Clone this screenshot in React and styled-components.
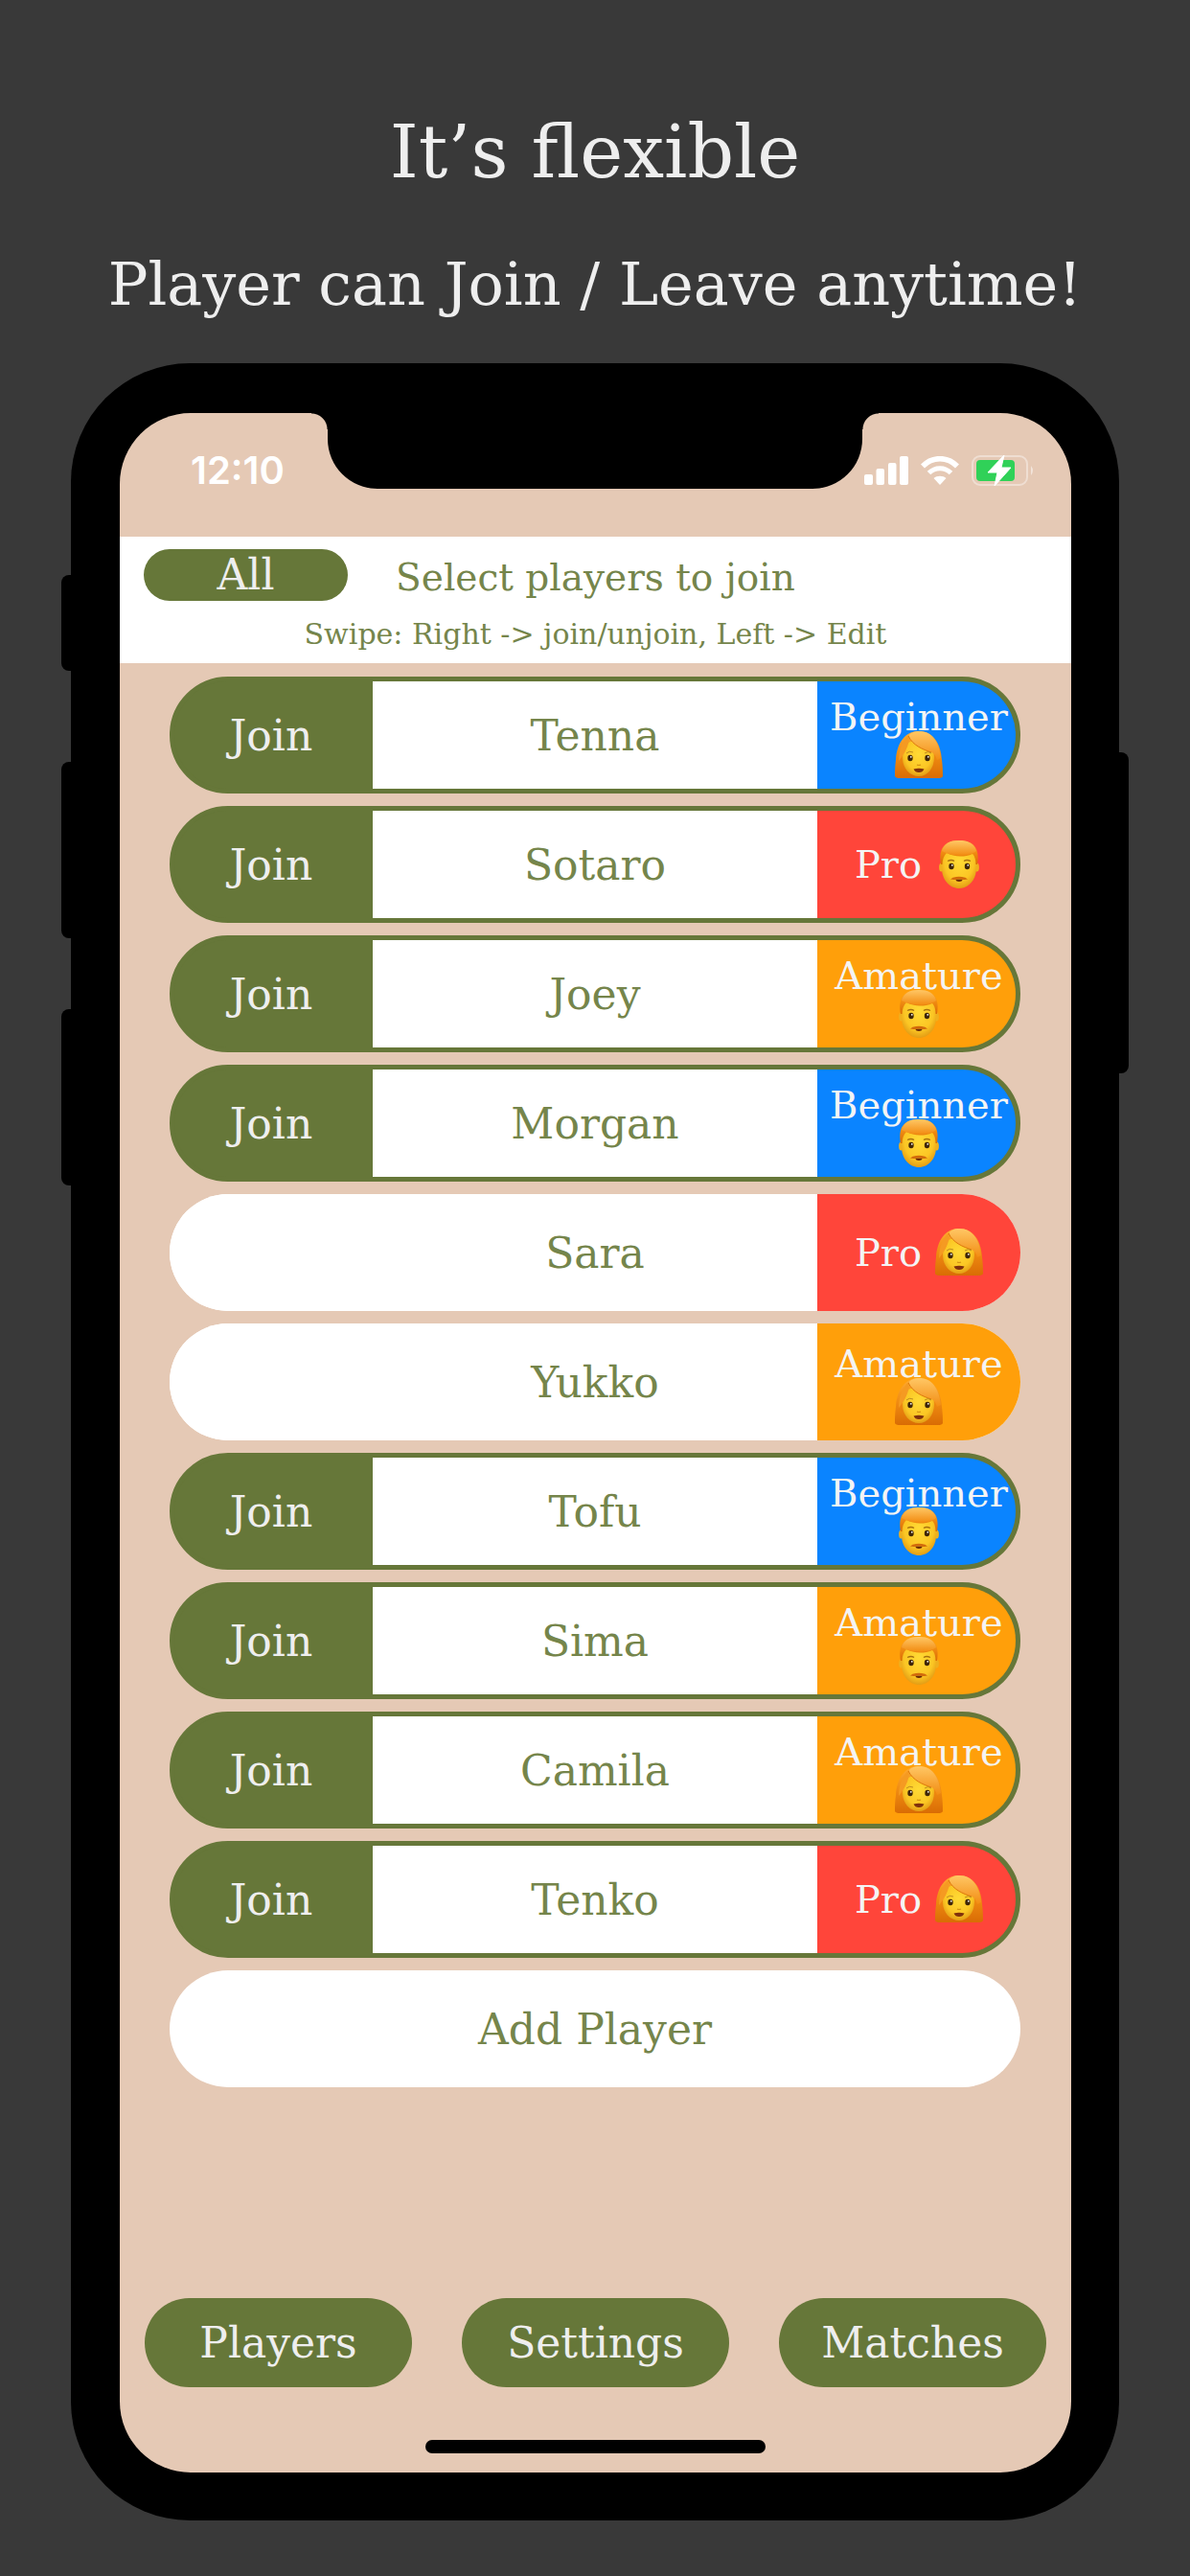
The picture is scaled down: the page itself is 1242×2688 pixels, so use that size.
import React, { useState } from "react";
import styled, { createGlobalStyle } from "styled-components";

const color = {
  page: "#393939",
  sand: "#e5c9b5",
  olive: "#667739",
  oliveText: "#75854b",
  light: "#eeeeee",
};

const levelColor = {
  Beginner: "#0a84ff",
  Pro: "#ff453a",
  Amature: "#ff9f0a",
};

const GlobalStyle = createGlobalStyle`
  *, *::before, *::after { box-sizing: border-box; }
  body {
    margin: 0;
    background: ${color.page};
    font-family: "DejaVu Serif", serif;
  }
  button {
    margin: 0;
    padding: 0;
    border: 0;
    font-family: inherit;
    cursor: pointer;
  }
`;

const Page = styled.main`
  min-height: 100vh;
  padding: 111px 74px 58px;
  background: ${color.page};
`;

const Intro = styled.header`
  display: flex;
  flex-direction: column;
  align-items: center;
  gap: 50px;
  margin: 0 -74px 42px;
  color: ${color.light};
  text-align: center;
`;

const Title = styled.h1`
  margin: 0;
  font-size: 76px;
  font-weight: 400;
  line-height: 96px;
`;

const Subtitle = styled.p`
  margin: 0;
  font-size: 62px;
  line-height: 80px;
`;

const Phone = styled.div`
  position: relative;
  padding: 52px 50px 50px 51px;
  border-radius: 124px;
  background: #000;
`;

const SideButton = styled.span`
  position: absolute;
  top: ${(p) => p.$top}px;
  ${(p) => p.$side}: -10px;
  width: 20px;
  height: ${(p) => p.$length}px;
  border-radius: 8px;
  background: #000;
`;

const Screen = styled.div`
  overflow: hidden;
  border-radius: 74px;
  background: ${color.sand};
`;

const StatusBar = styled.div`
  display: grid;
  grid-template-columns: 217px 1fr 218px;
  height: 129px;
`;

const Clock = styled.time`
  padding: 35px 0 0 74px;
  color: #fff;
  font-family: Inter, "Liberation Sans", sans-serif;
  font-size: 40px;
  font-weight: 600;
  line-height: 50px;
`;

const Notch = styled.div`
  position: relative;
  height: 79px;
  border-radius: 0 0 52px 52px;
  background: #000;

  &::before,
  &::after {
    content: "";
    position: absolute;
    top: 0;
    width: 17px;
    height: 17px;
  }
  &::before {
    right: 100%;
    background: radial-gradient(circle at 0 100%, transparent 16px, #000 17px);
  }
  &::after {
    left: 100%;
    background: radial-gradient(circle at 100% 100%, transparent 16px, #000 17px);
  }
`;

const StatusIcons = styled.div`
  display: flex;
  align-items: center;
  justify-content: flex-end;
  gap: 13px;
  height: 120px;
  padding-right: 38px;
`;

const Toolbar = styled.section`
  height: 132px;
  padding: 13px 25px 0;
  background: #fff;
  color: ${color.oliveText};
  text-align: center;
`;

const ToolbarRow = styled.div`
  display: grid;
  grid-template-columns: 213px 1fr 213px;
  align-items: start;
`;

const AllButton = styled.button`
  height: 54px;
  border-radius: 27px;
  background: ${color.olive};
  color: ${color.light};
  font-size: 44px;
  line-height: 54px;
`;

const Prompt = styled.h2`
  margin: 0;
  font-size: 39px;
  font-weight: 400;
  line-height: 60px;
  white-space: nowrap;
`;

const Hint = styled.p`
  margin: 0;
  font-size: 30px;
  line-height: 58px;
  white-space: nowrap;
`;

const List = styled.ul`
  display: flex;
  flex-direction: column;
  gap: 13px;
  margin: 0;
  padding: 14px 53px 220px 52px;
  list-style: none;
`;

const PlayerRow = styled.li`
  display: grid;
  grid-template-columns: ${(p) => (p.$joined ? "207px 1fr 207px" : "212px 1fr 212px")};
  height: 122px;
  overflow: hidden;
  border: ${(p) => (p.$joined ? 5 : 0)}px solid ${color.olive};
  border-radius: 61px;
  background: ${(p) => (p.$joined ? color.olive : "#fff")};
`;

const JoinButton = styled.button`
  padding-right: 5px;
  background: ${(p) => (p.$joined ? color.olive : "#fff")};
  color: ${color.light};
  font-size: 44px;
`;

const PlayerName = styled.span`
  display: flex;
  align-items: center;
  justify-content: center;
  background: #fff;
  color: ${color.oliveText};
  font-size: 44px;
`;

const Level = styled.span`
  display: flex;
  flex-direction: ${(p) => (p.$stacked ? "column" : "row")};
  align-items: center;
  justify-content: center;
  gap: ${(p) => (p.$stacked ? 0 : 14)}px;
  padding-top: ${(p) => (p.$stacked ? 12 : 0)}px;
  padding-left: ${(p) => (p.$joined ? 5 : 0)}px;
  background: ${(p) => p.$color};
  color: #f4f4f4;
  font-size: 40px;
  line-height: 30px;
`;

const Face = styled.svg`
  flex: none;
  width: 50px;
  height: 50px;
`;

const AddButton = styled.button`
  width: 100%;
  height: 122px;
  border-radius: 61px;
  background: #fff;
  color: ${color.oliveText};
  font-size: 44px;
`;

const TabBar = styled.nav`
  display: grid;
  grid-template-columns: repeat(3, 1fr);
  gap: 52px;
  padding: 0 26px 55px;
`;

const TabButton = styled.button`
  height: 93px;
  border-radius: 47px;
  background: ${color.olive};
  color: ${color.light};
  font-size: 44px;
`;

const HomeIndicator = styled.div`
  width: 355px;
  height: 14px;
  margin: 0 auto 20px;
  border-radius: 7px;
  background: #000;
`;

function Gradients() {
  return (
    <svg width="0" height="0" style={{ position: "absolute" }} aria-hidden="true">
      <defs>
        <radialGradient id="skin" cx="0.5" cy="0.4" r="0.65">
          <stop offset="0" stopColor="#ffda35" />
          <stop offset="0.65" stopColor="#fbc624" />
          <stop offset="1" stopColor="#dd9211" />
        </radialGradient>
        <linearGradient id="hair" x1="0" y1="0" x2="0" y2="1">
          <stop offset="0" stopColor="#ffab31" />
          <stop offset="0.5" stopColor="#f08c12" />
          <stop offset="1" stopColor="#d96c04" />
        </linearGradient>
        <linearGradient id="fringe" x1="0" y1="0" x2="0" y2="1">
          <stop offset="0" stopColor="#ffc765" />
          <stop offset="1" stopColor="#f28c12" />
        </linearGradient>
      </defs>
    </svg>
  );
}

function Woman() {
  return (
    <Face viewBox="0 0 50 50" role="img" aria-label="Woman">
      <path d="M25 0C10 0 2 13 1 30C0 38 0 44 0 47Q1 49 5 49H45Q49 49 50 47C50 43 50 38 49 30C48 13 40 0 25 0Z" fill="url(#hair)" />
      <path d="M8 25C9 14 15 9 25 9C35 9 41 16 41 27C41 39 34 47 25 47C16 47 8 39 8 28Z" fill="url(#skin)" />
      <path d="M14 5C19 15 29 19 38 22C41 23 43 26 44 30L48 28C46 10 38 0 25 0C20 0 16 2 14 5Z" fill="url(#fringe)" />
      <path d="M15 4C15 13 12 20 7 27L4 31C4 19 8 9 15 4Z" fill="#f59a22" />
      <path d="M14 5C19 15 29 19 38 22" fill="none" stroke="#dd790b" strokeWidth="1" />
      <path d="M12 23Q15 20 19 22M31 23Q35 20 38 23" fill="none" stroke="#bd8a20" strokeWidth="1" />
      <ellipse cx="16" cy="28" rx="2.7" ry="3.2" fill="#3f2608" />
      <ellipse cx="34" cy="28" rx="2.7" ry="3.2" fill="#3f2608" />
      <circle cx="16.8" cy="26.8" r="0.9" fill="#fff" />
      <circle cx="34.8" cy="26.8" r="0.9" fill="#fff" />
      <path d="M23 35Q25 36 27 35" fill="none" stroke="#d49313" strokeWidth="1.2" />
      <path d="M19.5 39.500Q25 38 30.5 39.500Q29 43 25 43Q21 43 19.5 39.500Z" fill="#80310c" />
    </Face>
  );
}

function Man() {
  return (
    <Face viewBox="0 0 50 50" role="img" aria-label="Man">
      <ellipse cx="6.500" cy="28" rx="2.4" ry="4.500" fill="#efb01e" />
      <ellipse cx="43.500" cy="28" rx="2.4" ry="4.500" fill="#efb01e" />
      <path d="M7 17C8 7 15 3 25 3C35 3 42 8 43 18V29C43 41 35 50 25 50C15 50 7 41 7 29Z" fill="url(#skin)" />
      <path d="M6 25C3 8 10 0 25 0C40 0 47 8 44 25L42.500 25C42.500 19 41 16 39 14C30 18 19 17 12 13C9 16 7.500 20 7.500 25Z" fill="url(#hair)" />
      <path d="M7 11C9 3 16 0 25 0C34 0 41 3 43 11C36 17 17 17 7 11Z" fill="url(#fringe)" />
      <path d="M13 21.500Q17 19.500 20 21.500M30 21.500Q33 19.500 37 21.500" fill="none" stroke="#a8700f" strokeWidth="1.3" />
      <ellipse cx="17" cy="27" rx="2.700" ry="3.200" fill="#3f2608" />
      <ellipse cx="33.500" cy="27" rx="2.700" ry="3.200" fill="#3f2608" />
      <circle cx="17.800" cy="25.800" r="0.9" fill="#fff" />
      <circle cx="34.300" cy="25.800" r="0.9" fill="#fff" />
      <path d="M21 40.500H29Q28 43 25 43Q22 43 21 40.500Z" fill="#682808" />
      <path d="M16 40.500Q18 38 22 38Q25 37.500 28 38Q32 38 34 40.500Q29 41.500 25 40Q21 41.500 16 40.500Z" fill="#d26a0b" />
    </Face>
  );
}

function SignalIcon() {
  return (
    <svg width="46" height="30" viewBox="0 0 46 30" fill="#fff" aria-hidden="true">
      <rect x="0" y="19" width="9" height="11" rx="2" />
      <rect x="12.500" y="13" width="8.500" height="17" rx="2" />
      <rect x="25" y="7" width="8.500" height="23" rx="2" />
      <rect x="37" y="0" width="9" height="30" rx="2" />
    </svg>
  );
}

function WifiIcon() {
  return (
    <svg width="40" height="30" viewBox="0 0 40 30" fill="none" stroke="#fff" aria-hidden="true">
      <path d="M2 10.500C12 0 28 0 38 10.500" strokeWidth="5.500" />
      <path d="M8.500 17.500C15 11 25 11 31.500 17.500" strokeWidth="5" />
      <path d="M20 30L13.500 23C17 20 23 20 26.500 23Z" fill="#fff" stroke="none" />
    </svg>
  );
}

function BatteryIcon() {
  return (
    <svg width="66" height="32" viewBox="0 0 66 32" aria-hidden="true">
      <rect x="1" y="1" width="57" height="30" rx="8" fill="none" stroke="#fff" strokeOpacity="0.4" strokeWidth="2" />
      <path d="M62 11Q66 16 62 21Z" fill="#fff" fillOpacity="0.5" />
      <rect x="5" y="5" width="40" height="22" rx="4" fill="#30d158" />
      <path d="M34 0L17 18H27L24 32L41 13H31Z" fill="#fff" stroke="#fff" strokeWidth="1" strokeLinejoin="round" />
    </svg>
  );
}

const initialPlayers = [
  { name: "Tenna", level: "Beginner", face: "woman", joined: true },
  { name: "Sotaro", level: "Pro", face: "man", joined: true },
  { name: "Joey", level: "Amature", face: "man", joined: true },
  { name: "Morgan", level: "Beginner", face: "man", joined: true },
  { name: "Sara", level: "Pro", face: "woman", joined: false },
  { name: "Yukko", level: "Amature", face: "woman", joined: false },
  { name: "Tofu", level: "Beginner", face: "man", joined: true },
  { name: "Sima", level: "Amature", face: "man", joined: true },
  { name: "Camila", level: "Amature", face: "woman", joined: true },
  { name: "Tenko", level: "Pro", face: "woman", joined: true },
];

export default function App() {
  const [players, setPlayers] = useState(initialPlayers);

  const toggle = (name) =>
    setPlayers((all) => all.map((p) => (p.name === name ? { ...p, joined: !p.joined } : p)));
  const joinAll = () => setPlayers((all) => all.map((p) => ({ ...p, joined: true })));

  return (
    <Page>
      <GlobalStyle />
      <Gradients />
      <Intro>
        <Title>It’s flexible</Title>
        <Subtitle>Player can Join / Leave anytime!</Subtitle>
      </Intro>
      <Phone>
        <SideButton $side="left" $top={221} $length={100} />
        <SideButton $side="left" $top={416} $length={184} />
        <SideButton $side="left" $top={674} $length={184} />
        <SideButton $side="right" $top={406} $length={335} />
        <Screen>
          <StatusBar>
            <Clock>12:10</Clock>
            <Notch />
            <StatusIcons>
              <SignalIcon />
              <WifiIcon />
              <BatteryIcon />
            </StatusIcons>
          </StatusBar>
          <Toolbar>
            <ToolbarRow>
              <AllButton type="button" onClick={joinAll}>All</AllButton>
              <Prompt>Select players to join</Prompt>
            </ToolbarRow>
            <Hint>Swipe: Right -&gt; join/unjoin, Left -&gt; Edit</Hint>
          </Toolbar>
          <List>
            {players.map((p) => (
              <PlayerRow key={p.name} $joined={p.joined}>
                <JoinButton
                  type="button"
                  $joined={p.joined}
                  aria-pressed={p.joined}
                  aria-label={`Join ${p.name}`}
                  onClick={() => toggle(p.name)}
                >
                  {p.joined ? "Join" : ""}
                </JoinButton>
                <PlayerName>{p.name}</PlayerName>
                <Level
                  $color={levelColor[p.level]}
                  $joined={p.joined}
                  $stacked={p.level !== "Pro"}
                >
                  {p.level}
                  {p.face === "woman" ? <Woman /> : <Man />}
                </Level>
              </PlayerRow>
            ))}
            <li>
              <AddButton type="button">Add Player</AddButton>
            </li>
          </List>
          <TabBar>
            <TabButton type="button">Players</TabButton>
            <TabButton type="button">Settings</TabButton>
            <TabButton type="button">Matches</TabButton>
          </TabBar>
          <HomeIndicator />
        </Screen>
      </Phone>
    </Page>
  );
}
